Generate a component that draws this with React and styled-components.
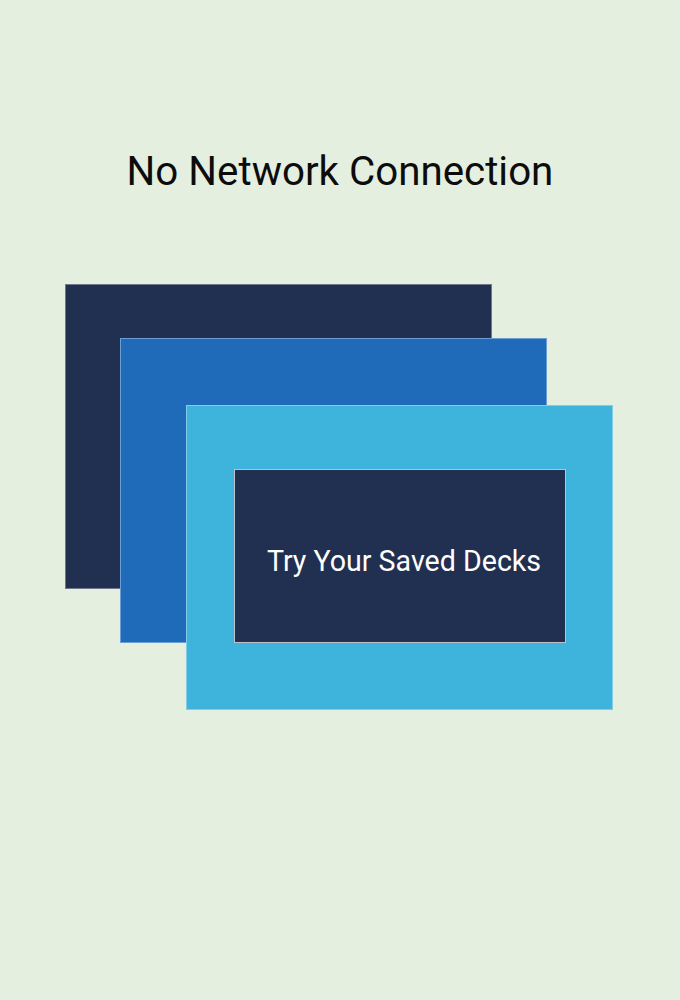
import styled, { createGlobalStyle } from 'styled-components'

const GlobalStyle = createGlobalStyle`
    html, body {
        margin: 0;
        padding: 0;
        background: #e4efe0;
        font-family: Roboto, "Liberation Sans", sans-serif;
    }
`;

const Page = styled.div`
    width: 680px;
    height: 1000px;
    background: #e4efe0;
    overflow: hidden;
`;

const Title = styled.h1`
    margin: 0;
    padding-top: 147px;
    text-align: center;
    font-size: 40.3px;
    font-weight: 400;
    line-height: 50px;
    color: #0c0c0c;
`;

const Stack = styled.div`
    display: grid;
    margin: 87px 0 0 65px;
`;

const Card = styled.div`
    grid-area: 1 / 1;
    box-sizing: border-box;
    width: 427px;
    height: 305px;
    margin-left: ${p => p.$x}px;
    margin-top: ${p => p.$y}px;
    background: ${p => p.$color};
    border: 1px solid rgba(255, 255, 255, 0.35);
`;

const FrontCard = styled(Card)`
    display: flex;
    align-items: flex-start;
    padding: 63px 0 0 47px;
`;

const Button = styled.div`
    box-sizing: border-box;
    width: 332px;
    height: 174px;
    display: flex;
    align-items: center;
    justify-content: center;
    background: #212f50;
    border: 1px solid rgba(255, 255, 255, 0.7);
    color: #ffffff;
    font-size: 28.6px;
    padding: 9px 0 0 8px;
`;

const App = () => {
    return (
        <Page>
            <GlobalStyle />
            <Title>No Network Connection</Title>
            <Stack>
                <Card $x={0} $y={0} $color="#212f50" />
                <Card $x={55} $y={54} $color="#1f6bb9" />
                <FrontCard $x={121} $y={121} $color="#3eb3db">
                    <Button>Try Your Saved Decks</Button>
                </FrontCard>
            </Stack>
        </Page>
    )
};

export default App;
